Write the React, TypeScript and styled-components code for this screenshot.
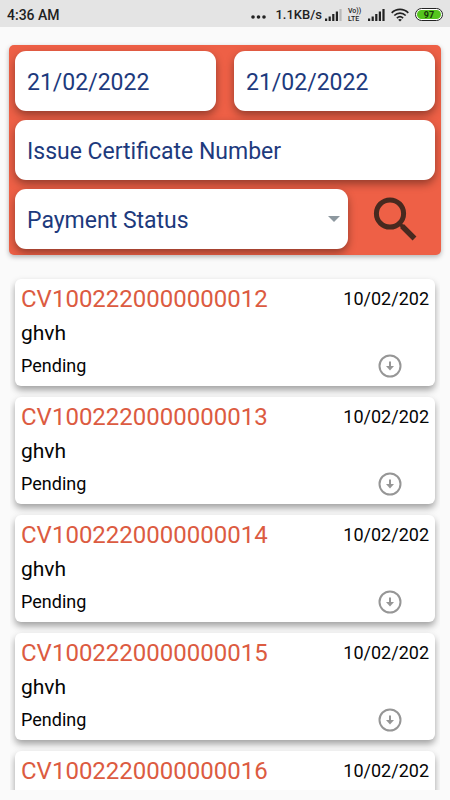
import React from "react";
import styled, { createGlobalStyle, css } from "styled-components";

const GlobalStyle = createGlobalStyle`
  *, *::before, *::after { box-sizing: border-box; }
  body { margin: 0; background: #fafafa; }
  body, input, select, button { font-family: Roboto, "Noto Sans", sans-serif; }
`;

const Screen = styled.div`
  display: flex;
  flex-direction: column;
  height: 100vh;
  padding-bottom: 10px;
  overflow: hidden;
  color: #050505;
`;

const StatusBar = styled.header`
  display: flex;
  flex: none;
  align-items: center;
  justify-content: space-between;
  height: 27px;
  padding: 2px 7px 0;
  background: #e4e4e4;
  color: #1f1f1f;
  font-size: 14px;
  font-weight: 500;
  line-height: 20px;
`;

const StatusGroup = styled.div`
  display: flex;
  align-items: center;
  gap: 6px;
`;

const Speed = styled.div`
  display: flex;
  align-items: center;
  gap: 3px;
  font-size: 13px;
`;

const Dots = styled.svg`
  margin: 4px 3px 0 0;
`;

const VoLte = styled.span`
  display: flex;
  flex-direction: column;
  width: 14px;
  font-size: 7px;
  line-height: 8px;
`;

const Battery = styled.span`
  display: flex;
  width: 28px;
  height: 13px;
  padding: 1px;
  border: 1px solid #222;
  border-radius: 7px;
  background: #fff;
`;

const BatteryLevel = styled.span`
  flex: 1;
  border-radius: 5px;
  background: #55c51d;
  color: #16330a;
  font-size: 9px;
  font-weight: 700;
  line-height: 10px;
  text-align: center;
`;

const SearchPanel = styled.form`
  display: grid;
  flex: none;
  gap: 9px;
  margin: 18px 9px 0;
  padding: 6px;
  overflow: hidden;
  border-radius: 5px;
  background: #ee6046;
  box-shadow: 0 2px 5px rgba(0, 0, 0, 0.28);
`;

const FieldRow = styled.div<{ $gap: number }>`
  display: flex;
  gap: ${({ $gap }) => $gap}px;
`;

const fieldStyle = css`
  flex: 1;
  width: 100%;
  min-width: 0;
  height: 60px;
  padding: 3px 12px 0;
  border: 0;
  border-radius: 11px;
  outline: 0;
  background: #fff;
  box-shadow: 0 4px 9px rgba(0, 0, 0, 0.38);
  color: #1d3a7d;
  font-size: 23px;
  line-height: 28px;
`;

const Field = styled.input`
  ${fieldStyle}
  &::placeholder { color: #1d3a7d; opacity: 1; }
`;

const SelectWrap = styled.div`
  position: relative;
  display: flex;
  flex: 1;
  min-width: 0;
`;

const Select = styled.select`
  ${fieldStyle}
  appearance: none;
`;

const Caret = styled.svg`
  position: absolute;
  top: 27px;
  right: 8px;
  pointer-events: none;
`;

const SearchButton = styled.button`
  display: flex;
  flex: none;
  align-items: center;
  justify-content: flex-start;
  width: 70px;
  height: 60px;
  padding: 0 0 0 8px;
  border: 0;
  background: none;
`;

const CertificateList = styled.ul`
  display: flex;
  flex: 1;
  flex-direction: column;
  gap: 11px;
  min-height: 0;
  margin: 19px 10px 0;
  padding: 5px;
  overflow-y: auto;
  scrollbar-width: none;
  list-style: none;
`;

const Card = styled.li`
  display: flex;
  flex: none;
  flex-direction: column;
  padding: 4px 6px 6px;
  border-radius: 6px;
  background: #fff;
  box-shadow: 0 4px 7px rgba(0, 0, 0, 0.36);
`;

const CardLine = styled.div`
  display: flex;
  align-items: center;
  justify-content: space-between;
`;

const Number = styled.span`
  color: #dc5b41;
  font-size: 24px;
  line-height: 32px;
`;

const IssueDate = styled.span`
  font-size: 18px;
  line-height: 32px;
`;

const Holder = styled.span`
  font-size: 21px;
  line-height: 37px;
`;

const Status = styled.span`
  font-size: 18px;
  line-height: 28px;
`;

const DownloadButton = styled.button`
  display: flex;
  margin-right: 27px;
  padding: 0;
  border: 0;
  background: none;
`;

const Signal = ({ faded }: { faded?: boolean }) => (
  <svg width="17" height="12" viewBox="0 0 17 12" fill="#222" aria-hidden="true">
    <rect x="0" y="9.5" width="2.2" height="2.5" />
    <rect x="3.6" y="7.5" width="2.2" height="4.5" />
    <rect x="7.2" y="5" width="2.2" height="7" />
    <rect x="10.8" y="2.5" width="2.2" height="9.5" />
    <rect x="14.4" y="0" width="2.2" height="12" fill={faded ? "#b9b9b9" : "#222"} />
  </svg>
);

const Wifi = () => (
  <svg width="18" height="14" viewBox="0 0 18 14" fill="none" stroke="#222" strokeWidth="1.7" aria-hidden="true">
    <path d="M.7 4.8C5.4.1 12.6.1 17.3 4.8" />
    <path d="M3.3 7.5c3.2-3.1 8.2-3.1 11.4 0" />
    <path d="M5.9 10.1c1.8-1.7 4.4-1.7 6.2 0" />
    <path d="M9 13.6 7.2 11.8c1-1 2.6-1 3.6 0Z" fill="#222" stroke="none" />
  </svg>
);

const Magnifier = () => (
  <svg width="44" height="44" viewBox="0 0 44 44" fill="none" stroke="#48291f" aria-hidden="true">
    <circle cx="17" cy="16.5" r="13.6" strokeWidth="5" />
    <path d="m26.5 26.5 5 5" strokeWidth="3.6" />
    <path d="M29 29 41.5 41.5" strokeWidth="5.4" />
  </svg>
);

const DownloadIcon = () => (
  <svg width="24" height="24" viewBox="0 0 24 24" fill="none" stroke="#969696" aria-hidden="true">
    <circle cx="12" cy="12" r="10.5" strokeWidth="2" />
    <path d="M12 7.5v6" strokeWidth="2" />
    <path d="M8 12h8l-4 4.5Z" fill="#969696" stroke="none" />
  </svg>
);

const certificates = ["12", "13", "14", "15", "16"].map((suffix) => ({
  number: `CV10022200000000${suffix}`,
  date: "10/02/202",
  holder: "ghvh",
  status: "Pending",
}));

export default function App() {
  return (
    <>
      <GlobalStyle />
      <Screen>
        <StatusBar>
          <span>4:36 AM</span>
          <StatusGroup>
            <Dots width="15" height="4" viewBox="0 0 15 4" fill="#222" aria-hidden="true">
              <circle cx="2" cy="2" r="1.8" />
              <circle cx="7.5" cy="2" r="1.8" />
              <circle cx="13" cy="2" r="1.8" />
            </Dots>
            <Speed>
              <span>1.1KB/s</span>
              <Signal faded />
            </Speed>
            <VoLte>
              <span>Vo))</span>
              <span>LTE</span>
            </VoLte>
            <Signal />
            <Wifi />
            <Battery>
              <BatteryLevel>97</BatteryLevel>
            </Battery>
          </StatusGroup>
        </StatusBar>

        <SearchPanel onSubmit={(event) => event.preventDefault()}>
          <FieldRow $gap={18}>
            <Field aria-label="From date" defaultValue="21/02/2022" />
            <Field aria-label="To date" defaultValue="21/02/2022" />
          </FieldRow>
          <Field aria-label="Issue Certificate Number" placeholder="Issue Certificate Number" />
          <FieldRow $gap={17}>
            <SelectWrap>
              <Select aria-label="Payment Status" defaultValue="">
                <option value="">Payment Status</option>
                <option value="pending">Pending</option>
              </Select>
              <Caret width="12" height="6" viewBox="0 0 12 6" aria-hidden="true">
                <path d="M0 0h12L6 6Z" fill="#8d989f" />
              </Caret>
            </SelectWrap>
            <SearchButton type="submit" aria-label="Search">
              <Magnifier />
            </SearchButton>
          </FieldRow>
        </SearchPanel>

        <CertificateList>
          {certificates.map((item) => (
            <Card key={item.number}>
              <CardLine>
                <Number>{item.number}</Number>
                <IssueDate>{item.date}</IssueDate>
              </CardLine>
              <Holder>{item.holder}</Holder>
              <CardLine>
                <Status>{item.status}</Status>
                <DownloadButton type="button" aria-label={`Download ${item.number}`}>
                  <DownloadIcon />
                </DownloadButton>
              </CardLine>
            </Card>
          ))}
        </CertificateList>
      </Screen>
    </>
  );
}
